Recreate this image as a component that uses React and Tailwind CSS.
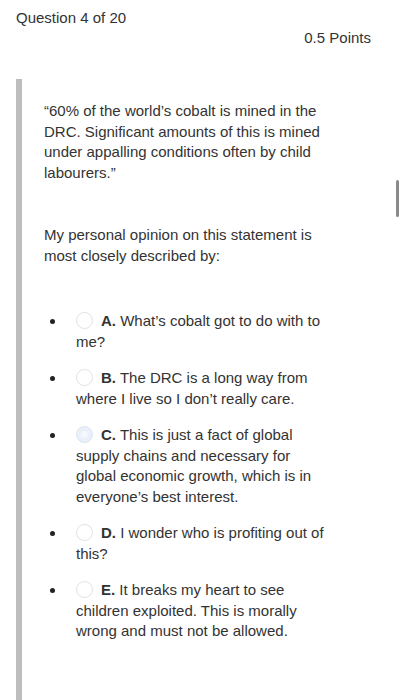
const options = [
  { key: 'A.', text: "What\u2019s cobalt got to do with to me?" },
  { key: 'B.', text: 'The DRC is a long way from where I live so I don\u2019t really care.' },
  {
    key: 'C.',
    text: 'This is just a fact of global supply chains and necessary for global economic growth, which is in everyone\u2019s best interest.',
    faded: true,
  },
  { key: 'D.', text: 'I wonder who is profiting out of this?' },
  { key: 'E.', text: 'It breaks my heart to see children exploited. This is morally wrong and must not be allowed.' },
];

function Radio({ faded }) {
  return (
    <span
      className={`relative inline-block align-middle w-[17px] h-[17px] rounded-full border mr-[8px] -mt-[3px] ${
        faded ? 'bg-[#e9f0f9] border-[#dbe4ee]' : 'bg-white border-[#e2e2e2]'
      }`}
    >
      {faded && <span className="absolute left-[4px] top-[4px] w-[7px] h-[7px] rounded-full bg-[#f4f7fb]" />}
    </span>
  );
}

export default function App() {
  return (
    <div
      className="relative h-[700px] overflow-hidden bg-white text-[#333] text-[15px] leading-[20.5px] flex flex-col"
      style={{ fontFamily: '"Liberation Sans", Arial, sans-serif' }}
    >
      <div className="pl-[16px] pt-[8px]">Question 4 of 20</div>
      <div className="pr-[32px] text-right mt-[-1px]">0.5 Points</div>

      <div className="flex-1 mt-[31px] ml-[16px] border-l-[6px] border-[#bdbdbd] pl-[22px] pt-[22px]">
        <p className="w-[290px]">
          &ldquo;60% of the world&rsquo;s cobalt is mined in the DRC. Significant amounts of this is mined under
          appalling conditions often by child labourers.&rdquo;
        </p>
        <p className="mt-[42px] w-[290px]">My personal opinion on this statement is most closely described by:</p>

        <ul className="mt-[45px]">
          {options.map(o => (
            <li key={o.key} className="flex mb-[16px]">
              <span className="shrink-0 mt-[8px] ml-[6px] w-[5px] h-[5px] rounded-full bg-[#222]" />
              <div className="ml-[21px] w-[252px]">
                <Radio faded={o.faded} />
                <span className="font-bold">{o.key}</span> {o.text}
              </div>
            </li>
          ))}
        </ul>
      </div>

      {/* scroll indicator */}
      <div className="absolute left-[396px] top-[180px] w-[3px] h-[37px] rounded-sm bg-[#8a8a8a]" />
    </div>
  );
}
